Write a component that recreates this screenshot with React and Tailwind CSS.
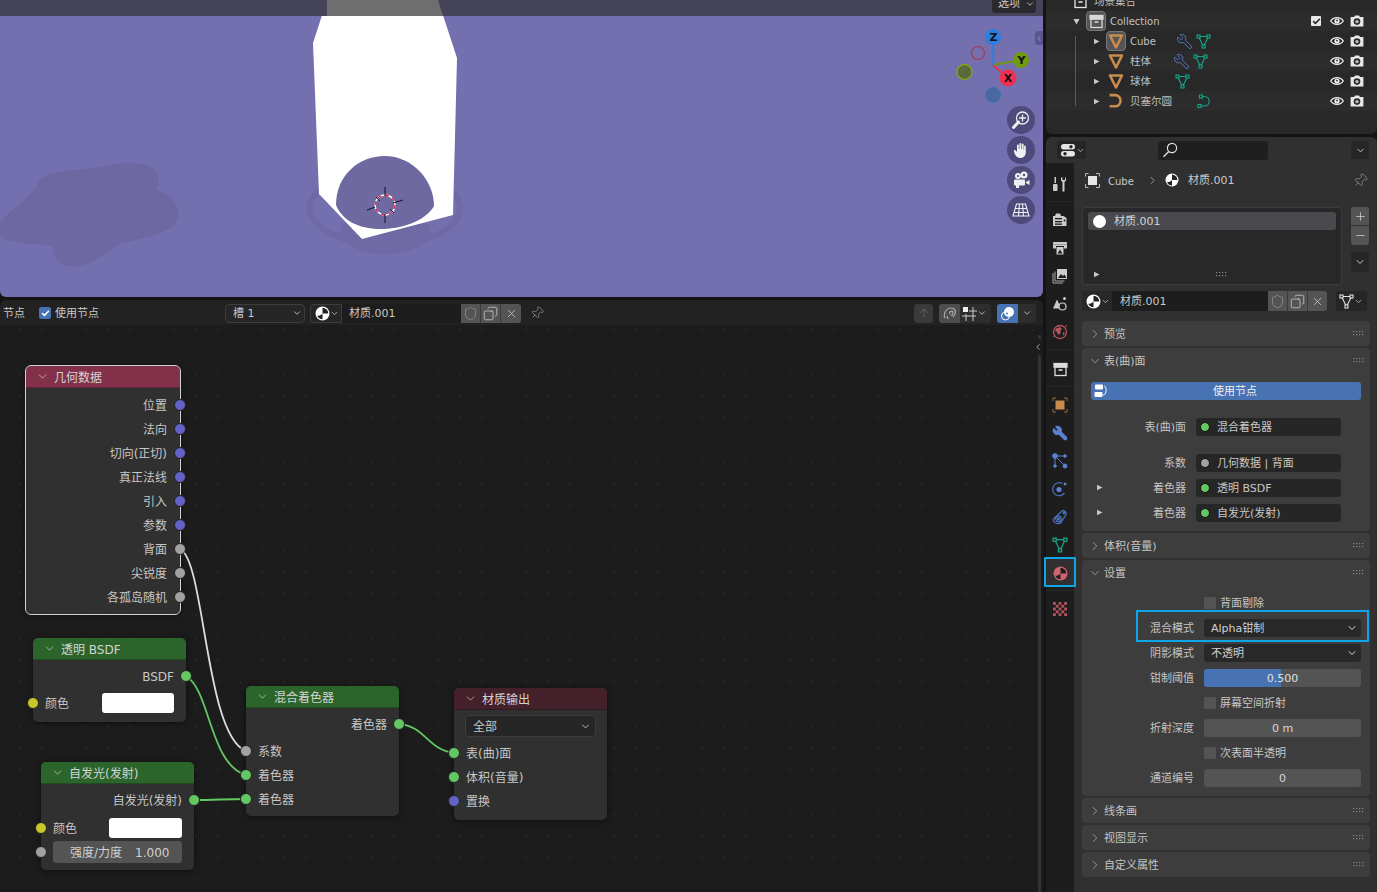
import React from 'react';
import { Wrench, ChevronDown, ChevronRight, Pin, X, Plus, Minus, Check, Shield, Copy, ArrowUp } from 'lucide-react';

const T = ({ children, cls = 'top-px' }) => <span className={`relative ${cls}`}>{children}</span>;

const Ball = ({ c = '#fff', d = '#222', s = 14 }) => (
  <svg width={s} height={s} viewBox="0 0 14 14" className="shrink-0">
    <circle cx="7" cy="7" r="6.5" fill={c} />
    <path d="M7 1.600A5.400 5.400 0 0 1 12.400 7H7Z" fill={d} />
    <path d="M7 7v5.400A5.400 5.400 0 0 1 2.100 9.200C4 9.200 6 8.500 7 7Z" fill={d} />
  </svg>
);
const Mesh = ({ c = '#12a98a', s = 15 }) => (
  <svg width={s} height={s} viewBox="0 0 15 15" fill="none" stroke={c} strokeWidth="1.100" className="shrink-0">
    <path d="M2.500 2.500h10L7.500 12.500Z" />
    <rect x="1" y="1" width="3" height="3" fill="#2a2a2a" />
    <rect x="11" y="1" width="3" height="3" fill="#2a2a2a" />
    <rect x="6" y="11" width="3" height="3" fill="#2a2a2a" />
  </svg>
);
const ObjTri = () => (
  <svg width="16" height="16" viewBox="0 0 16 16" className="shrink-0">
    <path d="M2 2.500h12L8 14.500Z" fill="none" stroke="#c98a4e" strokeWidth="2.600" strokeLinejoin="round" />
  </svg>
);
const Curve = ({ c = '#c98a4e', w = 2.400, s = 16 }) => (
  <svg width={s} height={s} viewBox="0 0 15 15" fill="none" stroke={c} strokeWidth={w} className="shrink-0">
    <path d="M1.500 2h5c7 0 7 10.500 0 10.500h-5" />
  </svg>
);
const CurveData = () => (
  <svg width="15" height="15" viewBox="0 0 15 15" fill="none" stroke="#12a98a" strokeWidth="1.100" className="shrink-0">
    <path d="M4 2.500h3c7 0 7 9.500 0 9.500H3" />
    <rect x="2.500" y="1" width="3" height="3" fill="#2a2a2a" />
    <rect x="1" y="10.500" width="3" height="3" fill="#2a2a2a" />
  </svg>
);
const Eye = () => (
  <svg width="14" height="10" viewBox="0 0 14 10" className="shrink-0">
    <path d="M.7 5C3.500.6 10.500.6 13.300 5 10.500 9.400 3.500 9.400.7 5Z" fill="none" stroke="#eee" strokeWidth="1.300" />
    <circle cx="7" cy="5" r="2.600" fill="#eee" />
    <circle cx="7" cy="4.600" r="0.900" fill="#2a2a2a" />
  </svg>
);
const Cam = () => (
  <svg width="14" height="12" viewBox="0 0 14 12" className="shrink-0">
    <path d="M1 2h3l1-1.500h4L10 2h3.400v9.500H.6V2Z" fill="#e8e8e8" />
    <circle cx="7" cy="6.600" r="3.300" fill="#2a2a2a" />
    <circle cx="7" cy="6.600" r="1.700" fill="#bbb" />
  </svg>
);
const Box = ({ c = '#e4e4e4', s = 15 }) => (
  <svg width={s} height={s} viewBox="0 0 15 15" fill="none" stroke={c} strokeWidth="1.300" className="shrink-0">
    <rect x="1" y="1.500" width="13" height="3.500" fill={c} />
    <rect x="2" y="5" width="11" height="8.500" />
    <path d="M5.500 8h4" strokeWidth="1.600" />
  </svg>
);
const Grip = () => (
  <svg width="11" height="5" viewBox="0 0 11 5" fill="#8a8a8a" className="shrink-0">
    {[0, 3, 6, 9].map(x => <g key={x}><rect x={x} y="0" width="1.200" height="1.200" /><rect x={x} y="3" width="1.200" height="1.200" /></g>)}
  </svg>
);
const Tri = ({ down }) => (
  <svg width="7" height="7" viewBox="0 0 7 7" fill="#c8c8c8" className="shrink-0">
    {down ? <path d="M.5 1h6L3.500 6.500Z" /> : <path d="M1 .8 6.500 3.500 1 6.200Z" />}
  </svg>
);

const Row = ({ ind, tri, icon, active, label, lw, extras, stripe, check, first }) => (
  <div className={`h-5 shrink-0 flex items-center relative ${stripe ? 'bg-[#2c2c2c]' : 'bg-[#282828]'} ${first ? '-mt-[9px]' : ''}`}>
    <div className={`flex items-center ${ind}`}>
      <div className="w-[13px] flex">{tri}</div>
      <div className={`w-[20px] h-[20px] flex items-center justify-center rounded-[4px] ${active ? 'bg-[#555] border border-[#777]' : ''}`}>{icon}</div>
      <div className={`text-[#c0c0c0] ml-[4px] ${lw}`}><T>{label}</T></div>
      <div className="flex items-center gap-[3px]">{extras}</div>
    </div>
    <div className="ml-auto flex items-center gap-[6px] pr-[13px]">
      {check && <div className="w-[10px] h-[10px] mr-[3px] bg-[#e8e8e8] rounded-[1px] flex items-center justify-center"><Check size={9} color="#222" strokeWidth={4} /></div>}
      {!first && <Eye />}
      {!first && <Cam />}
    </div>
  </div>
);

const WrenchO = ({ c = '#5274c0' }) => <Wrench size={17} color={c} strokeWidth={1.400} className="-scale-x-100 shrink-0" />;

const Outliner = () => (
  <div className="h-[134px] overflow-hidden bg-[#282828] rounded-b-[6px] text-[10.5px] flex flex-col">
    <Row first ind="pl-[11px]" tri={null} icon={<Box />} label="场景集合" lw="w-[50px]" />
    <Row stripe check ind="pl-[27px]" tri={<Tri down />} icon={<Box c="#d8d8d8" />} active label={<span className="text-[10px]">Collection</span>} lw="w-[60px]" />
    <Row ind="pl-[47px]" tri={<Tri />} icon={<ObjTri />} active label={<span className="text-[10px]">Cube</span>} lw="w-[46px]" extras={<><WrenchO /><Mesh /></>} />
    <Row stripe ind="pl-[47px]" tri={<Tri />} icon={<ObjTri />} label="柱体" lw="w-[43px]" extras={<><WrenchO /><Mesh /></>} />
    <Row ind="pl-[47px]" tri={<Tri />} icon={<ObjTri />} label="球体" lw="w-[45px]" extras={<Mesh />} />
    <Row stripe ind="pl-[47px]" tri={<Tri />} icon={<Curve />} label="贝塞尔圆" lw="w-[67px]" extras={<CurveData />} />
    <div className="w-px h-[70px] bg-[#5a5a5a] absolute left-[1075px] top-[36px]" />
  </div>
);

const Tab = ({ children, cls = '' }) => <div className={`h-[28px] w-full shrink-0 flex items-center justify-center ${cls}`}>{children}</div>;
const Sep = () => <div className="w-full h-px mt-[3px] mb-[4px] bg-[#262626] shrink-0" />;

const Tabs = () => (
  <div className="w-[28px] shrink-0 bg-[#1d1d1d] flex flex-col items-center pt-[7px] relative">
    <Tab>
      <svg width="16" height="16" viewBox="0 0 16 16" fill="#ccc"><rect x="2.500" y="1" width="1.500" height="6" /><rect x="1" y="8" width="4.500" height="7" rx="1" /><path d="M9 1.500v3l1.500 1.500v9.500h2V6L14 4.500v-3l-1 0v2.500h-2.500V1.500Z" /></svg>
    </Tab>
    <Sep />
    <Tab>
      <svg width="16" height="16" viewBox="0 0 16 16"><path d="M1 4h10.500l3 2v8H1Z" fill="#ccc" /><path d="M4 1.500h4L9 4H3Z" fill="#ccc" /><rect x="3" y="6" width="7" height="1.300" fill="#1d1d1d" /><rect x="3" y="9" width="7" height="1.300" fill="#1d1d1d" /><rect x="3" y="11.500" width="7" height="1.300" fill="#1d1d1d" /><circle cx="12.500" cy="8.500" r="1" fill="#1d1d1d" /></svg>
    </Tab>
    <Tab>
      <svg width="16" height="16" viewBox="0 0 16 16"><rect x="1" y="2" width="14" height="2.500" fill="#ccc" rx="0.500" /><path d="M1 4.500h14v4h-3V6H4v2.500H1Z" fill="#ccc" /><rect x="4.500" y="7" width="7" height="7.500" fill="#ccc" /><path d="M5.500 13.500 8 9.500l2.500 4Z" fill="#1d1d1d" /></svg>
    </Tab>
    <Tab>
      <svg width="16" height="16" viewBox="0 0 16 16" fill="none" stroke="#aaa" strokeWidth="1"><path d="M1 5v10h10" /><path d="M3 3.500V13h9.500" /><rect x="5" y="1" width="10" height="10" fill="#ccc" stroke="none" /><path d="M6 10l3-4 2 2 1.500-1.500L14.500 10Z" fill="#1d1d1d" stroke="none" /></svg>
    </Tab>
    <Tab>
      <svg width="16" height="16" viewBox="0 0 16 16"><path d="M5 3.500 9 12.500H1Z" fill="#ccc" /><circle cx="12.500" cy="2.500" r="1.500" fill="#ccc" /><circle cx="10.500" cy="10.500" r="3.500" fill="#1d1d1d" stroke="#ccc" strokeWidth="1.200" /></svg>
    </Tab>
    <Tab>
      <svg width="16" height="16" viewBox="0 0 16 16"><circle cx="8" cy="8" r="6.500" fill="#1d1d1d" stroke="#b5535f" strokeWidth="1.300" /><path d="M4 4.500 8 3l2 2-2 2 1 2-3 2-1-3-2-1ZM11 8l2 1-2 3Z" fill="#b5535f" /><path d="M1 13 3 11M13 3l2-2" stroke="#b5535f" /></svg>
    </Tab>
    <div className="w-full h-px mt-[3px] mb-[5px] bg-[#262626] shrink-0" />
    <Tab><Box c="#dcdcdc" /></Tab>
    <Sep />
    <Tab>
      <svg width="16" height="16" viewBox="0 0 16 16" fill="none" stroke="#9a6a3c" strokeWidth="1"><path d="M1 4V1h3M12 1h3v3M15 12v3h-3M4 15H1v-3" /><rect x="3.500" y="3.500" width="9" height="9" fill="#c98a4e" stroke="none" /></svg>
    </Tab>
    <Tab><Wrench size={16} color="#5a80d0" fill="#5a80d0" className="-scale-x-100" /></Tab>
    <Tab>
      <svg width="16" height="16" viewBox="0 0 16 16" stroke="#5a80d0" strokeWidth="1" fill="#5a80d0"><path d="M3 3h10M3 3v10M3 3l10 10" /><circle cx="3" cy="3" r="2.400" /><circle cx="13" cy="3" r="1.300" /><circle cx="3" cy="13" r="1.300" /><circle cx="13" cy="13" r="2" /></svg>
    </Tab>
    <Tab>
      <svg width="16" height="16" viewBox="0 0 16 16" fill="none" stroke="#4a70bd" strokeWidth="1.300"><path d="M12.500 12A6.500 6.500 0 1 1 10 2.300" /><circle cx="7" cy="8.500" r="2.600" fill="#5a80d0" stroke="none" /><circle cx="13" cy="3" r="1.500" fill="#5a80d0" stroke="none" /></svg>
    </Tab>
    <Tab>
      <svg width="16" height="16" viewBox="0 0 16 16" fill="none" stroke="#4a70bd" strokeWidth="1.300"><path d="M1.500 10 10 2c2-1.500 4.500 1 4 3.500L9 13.500c-3 2.500-9 0-7.500-3.500Z" /><circle cx="6.500" cy="10" r="2.800" /><circle cx="6.500" cy="10" r="1" fill="#5a80d0" /><circle cx="12" cy="4" r="0.800" fill="#5a80d0" /></svg>
    </Tab>
    <Tab><Mesh s={16} /></Tab>
    <Tab cls="bg-[#303030]">
      <Ball c="#cf6470" d="#1d1d1d" s={15} />
    </Tab>
    <Sep />
    <Tab>
      <svg width="14" height="14" viewBox="0 0 14 14"><rect width="14" height="14" fill="#b5535f" />{[[2.800,0],[8.400,0],[0,2.800],[5.600,2.800],[11.200,2.800],[2.800,5.600],[8.400,5.600],[0,8.400],[5.600,8.400],[11.200,8.400],[2.800,11.200],[8.400,11.200]].map(([x, y]) => <rect key={`${x}-${y}`} x={x} y={y} width="2.800" height="2.800" fill="#1d1d1d" />)}</svg>
    </Tab>
  </div>
);

const Panel = ({ title, open, children, cls = 'h-[25px]' }) => (
  <div className={`bg-[#3d3d3d] rounded-[4px] shrink-0 ${cls}`}>
    <div className="h-[25px] flex items-center pl-[6px] pr-[6px] text-[#c4c4c4]">
      {open ? <ChevronDown size={14} color="#bbb" strokeWidth={1.200} /> : <ChevronRight size={14} color="#bbb" strokeWidth={1.200} />}
      <span className="ml-[2px]"><T cls="top-[2px]">{title}</T></span>
      <span className="ml-auto"><Grip /></span>
    </div>
    {children}
  </div>
);

const SockField = ({ label, color, text, tri }) => (
  <div className="flex items-center h-[18px] relative">
    {tri && <div className="absolute left-[14px] top-[5px]"><Tri /></div>}
    <div className="w-[104px] text-right text-[#c4c4c4]"><T>{label}</T></div>
    <div className="ml-[10px] w-[145px] h-[18px] bg-[#262626] rounded-[3px] flex items-center pl-[4px] text-[#c8c8c8]">
      <span className="w-[10px] h-[10px] rounded-full border border-[#111] shrink-0" style={{ background: color }} />
      <span className="ml-[7px]"><T>{text}</T></span>
    </div>
  </div>
);

const SetRow = ({ label, children }) => (
  <div className="flex items-center h-[18px]">
    <div className="w-[112px] text-right text-[#c4c4c4]"><T>{label}</T></div>
    <div className="ml-[10px] w-[157px] h-[18px]">{children}</div>
  </div>
);
const Sel = ({ text }) => (
  <div className="h-full bg-[#282828] rounded-[3px] flex items-center pl-[7px] pr-[3px] text-[#d0d0d0]">
    <T>{text}</T><ChevronDown size={12} color="#ddd" className="ml-auto" />
  </div>
);
const Num = ({ text }) => (
  <div className="h-full bg-[#545454] rounded-[3px] flex items-center justify-center text-[#d8d8d8]"><T>{text}</T></div>
);
const Chk = ({ text }) => (
  <div className="flex items-center h-[18px] pl-[122px] text-[#c8c8c8]">
    <span className="w-[12px] h-[12px] rounded-[2px] bg-[#545454]" />
    <span className="ml-[4px]"><T>{text}</T></span>
  </div>
);

const Props = () => (
  <div className="flex-1 min-h-0 mt-[3px] bg-[#303030] rounded-t-[6px] flex flex-col text-[11px]">
    <div className="h-[26px] shrink-0 flex items-center pl-[11px] pr-[8px]">
      <div className="w-[29px] h-[18px] bg-[#262626] rounded-[3px] flex items-center pl-[4px]">
        <svg width="15" height="13" viewBox="0 0 15 13" fill="#e5e5e5"><rect x="0" y="0" width="14" height="5.500" rx="2.700" /><rect x="0" y="7" width="14" height="5.500" rx="2.700" /><circle cx="10" cy="2.700" r="1.700" fill="#262626" /><circle cx="4" cy="9.700" r="1.700" fill="#262626" /></svg>
        <ChevronDown size={9} color="#ccc" />
      </div>
      <div className="ml-[72px] w-[110px] h-[19px] bg-[#1f1f1f] rounded-[3px] flex items-center pl-[4px]">
        <svg width="16" height="16" viewBox="0 0 16 16" fill="none" stroke="#e0e0e0" strokeWidth="1.200"><circle cx="10" cy="6" r="4.600" /><path d="M6.800 9.400 1.500 14.800" strokeWidth="1.400" /></svg>
      </div>
      <div className="ml-auto w-[18px] h-[18px] bg-[#262626] rounded-[3px] flex items-center justify-center"><ChevronDown size={11} color="#ccc" /></div>
    </div>
    <div className="flex-1 min-h-0 flex">
      <Tabs />
      <div className="relative flex-1 min-w-0 pl-[8px] pr-[7px] flex flex-col">
        <div className="h-[34px] shrink-0 flex items-center pl-[3px] text-[#c8c8c8]">
          <svg width="15" height="15" viewBox="0 0 15 15" fill="none" stroke="#bbb" className="shrink-0"><path d="M.5 3.500V.5h3M11 .5h3.500v3M14.500 11v3.500H11M3.500 14.500h-3V11" /><rect x="3" y="3" width="9" height="9" fill="#e6e6e6" stroke="none" /></svg>
          <span className="ml-[8px] text-[10px] w-[38px]"><T>Cube</T></span>
          <ChevronRight size={13} color="#bbb" strokeWidth={1.300} />
          <span className="ml-[6px]"><Ball /></span>
          <span className="ml-[9px]"><T>材质.001</T></span>
          <Pin size={15} color="#999" strokeWidth={1.200} className="ml-auto mr-[2px] rotate-45" />
        </div>
        <div className="h-[78px] mt-[10px] shrink-0 flex gap-[9px]">
          <div className="w-[260px] h-full bg-[#282828] rounded-[4px] border border-[#3c3c3c] relative px-[5px] pt-[4px]">
            <div className="h-[18px] bg-[#4a4a4e] rounded-[3px] flex items-center pl-[5px] text-[#d0d0d0]">
              <span className="w-[13px] h-[13px] rounded-full bg-white" />
              <span className="ml-[8px]"><T>材质.001</T></span>
            </div>
            <div className="absolute left-[10px] bottom-[6px]"><Tri /></div>
            <div className="absolute left-[133px] bottom-[7px]"><Grip /></div>
          </div>
          <div className="flex flex-col w-[18px]">
            <div className="h-[19px] bg-[#545454] rounded-t-[3px] flex items-center justify-center border-b border-[#333]"><Plus size={13} color="#ddd" strokeWidth={1.300} /></div>
            <div className="h-[19px] bg-[#545454] rounded-b-[3px] flex items-center justify-center"><Minus size={13} color="#ddd" strokeWidth={1.300} /></div>
            <div className="h-[20px] mt-[7px] bg-[#262626] rounded-[3px] flex items-center justify-center"><ChevronDown size={12} color="#ccc" /></div>
          </div>
        </div>
        <div className="h-[20px] mt-[6px] shrink-0 flex items-center">
          <div className="w-[30px] h-full bg-[#282828] rounded-l-[3px] flex items-center pl-[4px]"><Ball s={15} /><ChevronDown size={9} color="#ccc" /></div>
          <div className="w-[156px] h-full bg-[#1d1d1d] flex items-center pl-[8px] text-[#c8c8c8]"><T>材质.001</T></div>
          <div className="w-[20px] h-full bg-[#545454] flex items-center justify-center border-r border-[#3a3a3a]"><Shield size={15} color="#999" strokeWidth={1.100} /></div>
          <div className="w-[20px] h-full bg-[#545454] flex items-center justify-center border-r border-[#3a3a3a]"><Copy size={15} color="#ddd" strokeWidth={1.100} className="-scale-x-100" /></div>
          <div className="w-[19px] h-full bg-[#545454] rounded-r-[3px] flex items-center justify-center"><X size={13} color="#ddd" strokeWidth={1.300} /></div>
          <div className="ml-[9px] w-[31px] h-full bg-[#262626] rounded-[3px] flex items-center pl-[3px]"><Mesh c="#e0e0e0" s={15} /><ChevronDown size={9} color="#ccc" /></div>
        </div>
        <div className="mt-[10px] flex flex-col gap-[2px]">
          <Panel title="预览" />
          <Panel title="表(曲)面" open cls="h-[183px]">
            <div className="mt-[9px] mx-[9px] h-[18px] bg-[#4772b3] rounded-[3px] relative flex items-center justify-center pl-[18px] text-[#f0f0f0]">
              <svg width="14" height="14" viewBox="0 0 14 14" className="absolute left-[3px]"><rect x="1" y="0.500" width="8" height="5" rx="1" fill="#fff" /><rect x="0.500" y="8" width="8" height="5" rx="1" fill="#fff" /><path d="M10 2c3 0 3 9-1 9" fill="none" stroke="#fff" /></svg>
              <T>使用节点</T>
            </div>
            <div className="mt-[18px]"><SockField label="表(曲)面" color="#63c763" text="混合着色器" /></div>
            <div className="mt-[18px] flex flex-col gap-[7px]">
              <SockField label="系数" color="#a1a1a1" text="几何数据 | 背面" />
              <SockField label="着色器" color="#63c763" text="透明 BSDF" tri />
              <SockField label="着色器" color="#63c763" text="自发光(发射)" tri />
            </div>
          </Panel>
          <Panel title="体积(音量)" />
          <Panel title="设置" open cls="h-[236px]">
            <div className="mt-[9px] flex flex-col gap-[7px]">
              <Chk text="背面剔除" />
              <SetRow label="混合模式"><Sel text="Alpha钳制" /></SetRow>
              <SetRow label="阴影模式"><Sel text="不透明" /></SetRow>
              <SetRow label="钳制阈值">
                <div className="h-full bg-[#545454] rounded-[3px] relative overflow-hidden flex items-center justify-center text-[#e0e0e0]">
                  <div className="absolute left-0 top-0 bottom-0 w-[77px] bg-[#4772b3]" />
                  <T>0.500</T>
                </div>
              </SetRow>
              <Chk text="屏幕空间折射" />
              <SetRow label="折射深度"><Num text="0 m" /></SetRow>
              <Chk text="次表面半透明" />
              <SetRow label="通道编号"><Num text="0" /></SetRow>
            </div>
          </Panel>
          <Panel title="线条画" />
          <Panel title="视图显示" />
          <Panel title="自定义属性" />
        </div>
      </div>
    </div>
  </div>
);

const Scene = () => (
  <svg width="1043" height="297" viewBox="0 0 1043 297" className="absolute inset-0">
    <g fill="#6d68a2">
      <path d="M0 222C15 205 35 195 38 182c5-10 40-12 60-15 25-6 55-7 60 8 2 8-2 12-2 15 15 4 24 14 22 28-2 13-25 18-55 25-15 5-25 20-45 23-25 3-25-15-25-20-20-3-50-2-53-12Z" />
      <ellipse cx="385" cy="208" rx="75" ry="37" fill="none" stroke="#6f6aa6" strokeWidth="6" />
      <ellipse cx="385" cy="232" rx="45" ry="22" fill="#6f6aa6" />
    </g>
    <path d="M327 0H438L457 58 453 215 362 239 319 194 313 43Z" fill="#fff" />
    <path d="M336 205C336 176 358 156 385 156 412 156 434 180 434 206 425 222 400 229 380 229 358 229 342 220 336 205Z" fill="#6e69a0" />
    <g fill="none">
      <circle cx="385" cy="205" r="10" stroke="#fff" strokeWidth="1.400" />
      <circle cx="385" cy="205" r="10" stroke="#e02040" strokeWidth="1.400" strokeDasharray="3.800 4" />
      <path d="M385 187v9M385 214v9M367 210l8-3M393 203l10-3" stroke="#1b1b35" strokeWidth="1.100" />
      <path d="M376 197l4 4M390 209l4 4" stroke="#1b1b35" strokeWidth="1" />
    </g>
    <rect x="0" y="0" width="1043" height="16" fill="#45435a" />
    <path d="M327 0H438L443 16H327Z" fill="#6e6e6e" />
    <g>
      <path d="M993 37V65" stroke="#2a7fdf" strokeWidth="1.800" />
      <path d="M993 65 1021 60" stroke="#6f9a10" strokeWidth="1.800" />
      <path d="M993 65 1008 78" stroke="#e8304c" strokeWidth="1.800" />
      <circle cx="978" cy="53" r="6.500" fill="none" stroke="#a83a50" strokeWidth="1.200" />
      <circle cx="964.500" cy="72" r="7.500" fill="#5a6a3a" stroke="#7fa51a" strokeWidth="1.400" />
      <circle cx="993" cy="95" r="7.500" fill="#4a68a0" stroke="#3e70b8" strokeWidth="1" />
      <circle cx="993" cy="37" r="8" fill="#2a7fdf" />
      <circle cx="1021" cy="60" r="8" fill="#6f9a10" />
      <circle cx="1008" cy="78" r="8.500" fill="#f0304f" />
    </g>
    <g fontFamily="'DejaVu Sans',sans-serif" fontSize="11" fontWeight="700" textAnchor="middle" fill="#111">
      <text x="993.500" y="41">Z</text>
      <text x="1021.500" y="64">Y</text>
      <text x="1008" y="82">X</text>
    </g>
  </svg>
);

const NavBtn = ({ children }) => (
  <div className="w-[28px] h-[28px] rounded-full bg-[#4e4a7c] flex items-center justify-center">{children}</div>
);

const Viewport = () => (
  <div className="relative h-[297px] shrink-0 bg-[#746fae] overflow-hidden rounded-b-[6px] text-[11px]">
    <Scene />
    <div className="absolute left-[992px] -top-[5px] w-[44px] h-[18px] bg-[#29292e] rounded-[3px] flex items-center pl-[6px] text-[#d0d0d0]">选项<ChevronDown size={10} color="#ccc" className="ml-[5px]" /></div>
    <div className="absolute left-[1035px] top-[31px] w-[8px] h-[14px] bg-[#5a5690] rounded-l-[3px] flex items-center justify-center">
      <ChevronRight size={9} color="#bbb" className="rotate-180" />
    </div>
    <div className="absolute left-[1007px] top-[106px] flex flex-col gap-[2px]">
      <NavBtn>
        <svg width="20" height="20" viewBox="0 0 20 20" fill="none" stroke="#f0f0f0" strokeWidth="1.300"><circle cx="11.500" cy="8" r="6" /><path d="M8 8h7M11.500 4.500v7" /><path d="M7.500 12 2.500 17.500" strokeWidth="3" strokeLinecap="round" /></svg>
      </NavBtn>
      <NavBtn>
        <svg width="18" height="18" viewBox="0 0 18 18" fill="#f0f0f0"><path d="M2 9.500c1-1 2 0 3 1.500V4.500c0-1.300 1.800-1.300 1.800 0V8h.6V2.800c0-1.200 1.800-1.200 1.800 0V8h.6V3.500c0-1.200 1.800-1.200 1.800 0V8.500h.5V5.500c0-1.200 1.700-1.200 1.700 0V11c0 3.500-2 6-5.500 6-3 0-4-1.500-5.500-4C2.500 11.500 1.500 10.200 2 9.500Z" /></svg>
      </NavBtn>
      <NavBtn>
        <svg width="20" height="20" viewBox="0 0 20 20" fill="#f0f0f0"><circle cx="7" cy="6" r="3" /><circle cx="13" cy="5" r="3.500" /><circle cx="7" cy="6" r="1" fill="#4e4a7c" /><circle cx="13" cy="5" r="1.200" fill="#4e4a7c" /><rect x="3" y="9.500" width="11" height="6" rx="1" /><path d="M15 12l3.500-2v5l-3.500-2Z" /><rect x="5" y="15" width="3" height="3" /></svg>
      </NavBtn>
      <NavBtn>
        <svg width="18" height="18" viewBox="0 0 18 18" fill="none" stroke="#f0f0f0" strokeWidth="1.100"><path d="M4.500 3h9L17 15H1ZM3 7.500h12M1.800 11.500h14.400M7.500 3 6.500 15M10.500 3 11.500 15" /></svg>
      </NavBtn>
    </div>
  </div>
);

const Socket = ({ c, side }) => (
  <span className={`absolute top-1/2 -translate-y-1/2 w-[12px] h-[12px] rounded-full border border-[#222] ${side === 'l' ? '-left-[6px]' : '-right-[6px]'}`} style={{ background: c }} />
);
const BLUE = '#6363c7', GRAY = '#a1a1a1', GREEN = '#63c763', YEL = '#c7c729';
const NR = ({ c, side = 'r', h = 'h-6', pr = 'pr-[12px]', pl = 'pl-[12px]', cls = '', children }) => (
  <div className={`relative flex items-center ${h} ${side === 'r' ? `justify-end ${pr}` : pl} ${cls}`}>
    {c && <Socket c={c} side={side} />}
    {children}
  </div>
);
const Node = ({ title, hd, pos, sel, children, body = 'pt-[5px] pb-[5px]' }) => (
  <div className={`absolute ${pos} bg-[#303030] rounded-[5px] shadow-[0_1px_6px_rgba(0,0,0,0.5)] text-[12px] text-[#c6c6c6] ${sel ? 'outline outline-[1.5px] outline-[#d2d2d2]' : ''}`}>
    <div className={`h-[22px] flex items-center pl-[10px] rounded-t-[5px] border-b border-[#00000040] text-[#d4d4d4] ${hd}`}>
      <ChevronDown size={13} color="#ddd" strokeWidth={1.200} />
      <span className="ml-[5px]"><T>{title}</T></span>
    </div>
    <div className={body}>{children}</div>
  </div>
);

const Canvas = () => (
  <div className="relative flex-1 min-h-0 overflow-hidden bg-[#1c1c1c] bg-[radial-gradient(circle,#262626_1.4px,transparent_1.6px)] bg-[length:22px_22px] bg-[position:9px_-6px]">
    <svg width="1043" height="567" viewBox="0 325 1043 567" fill="none" className="absolute inset-0" strokeWidth="1.800">
      <path d="M180 549C205 560 205 735 246 751" stroke="#dcdcdc" />
      <path d="M186 676C210 690 210 765 246 775" stroke="#63c763" />
      <path d="M194 800C215 800 225 799 246 799" stroke="#63c763" />
      <path d="M399 724C425 726 428 750 454 753" stroke="#63c763" />
    </svg>
    <Node title="几何数据" hd="bg-[#83314a]" pos="left-[26px] top-[41px] w-[154px]" sel>
      {[['位置', BLUE], ['法向', BLUE], ['切向(正切)', BLUE], ['真正法线', BLUE], ['引入', BLUE], ['参数', BLUE], ['背面', GRAY], ['尖锐度', GRAY], ['各孤岛随机', GRAY]].map(([t, c]) => <NR key={t} c={c} pr="pr-[13px]"><T>{t}</T></NR>)}
    </Node>
    <Node title="透明 BSDF" hd="bg-[#2b652b]" pos="left-[33px] top-[313px] w-[153px]" body="pt-[4px] pb-[4px]">
      <NR c={GREEN} h="h-[24px]"><T>BSDF</T></NR>
      <NR c={YEL} side="l" h="h-[30px]">
        <T>颜色</T><span className="ml-auto mr-[12px] w-[72px] h-[20px] bg-white rounded-[3px]" />
      </NR>
    </Node>
    <Node title="自发光(发射)" hd="bg-[#2b652b]" pos="left-[41px] top-[437px] w-[153px]" body="pt-[4px] pb-[7px]">
      <NR c={GREEN} h="h-[24px]"><T>自发光(发射)</T></NR>
      <NR c={YEL} side="l" h="h-[32px]">
        <T>颜色</T><span className="ml-auto mr-[12px] w-[73px] h-[20px] bg-white rounded-[3px]" />
      </NR>
      <NR c={GRAY} side="l" h="h-[22px]" cls="-mt-[3px]">
        <span className="w-[129px] h-[22px] bg-[#545454] rounded-[3px] flex items-center pl-[17px] text-[#d0d0d0]">
          <T>强度/力度</T><span className="ml-[13px]"><T>1.000</T></span>
        </span>
      </NR>
    </Node>
    <Node title="混合着色器" hd="bg-[#2b652b]" pos="left-[246px] top-[361px] w-[153px]" body="pt-[4px] pb-[5px]">
      <NR c={GREEN} h="h-[24px]"><T>着色器</T></NR>
      <div className="h-[3px]" />
      <NR c={GRAY} side="l"><T>系数</T></NR>
      <NR c={GREEN} side="l"><T>着色器</T></NR>
      <NR c={GREEN} side="l"><T>着色器</T></NR>
    </Node>
    <Node title="材质输出" hd="bg-[#43202a]" pos="left-[454px] top-[363px] w-[153px]" body="pt-[5px] pb-[7px]">
      <div className="mx-[11px] mb-[4px] h-[22px] bg-[#262626] border border-[#3d3d3d] rounded-[4px] flex items-center pl-[7px] pr-[4px]"><T>全部</T><ChevronDown size={11} color="#ccc" className="ml-auto" /></div>
      <NR c={GREEN} side="l"><T>表(曲)面</T></NR>
      <NR c={GREEN} side="l"><T>体积(音量)</T></NR>
      <NR c={BLUE} side="l"><T>置换</T></NR>
    </Node>
    <div className="absolute left-[1038px] top-[10px] bottom-0 w-[3px] bg-[#333]" />
    <div className="absolute left-[1033px] top-[14px] w-[10px] h-[16px] bg-[#1c1c1c] flex items-center justify-center">
      <ChevronRight size={12} color="#bbb" className="rotate-180" />
    </div>
  </div>
);

const NodeHeader = () => (
  <div className="h-[25px] shrink-0 bg-[#222] flex items-center pt-px text-[11px] text-[#c8c8c8] pl-[3px] pr-[7px]">
    <T>节点</T>
    <span className="ml-[14px] w-[12px] h-[12px] rounded-[2px] bg-[#4772b3] flex items-center justify-center"><Check size={9} color="#fff" strokeWidth={4} /></span>
    <span className="ml-[4px]"><T>使用节点</T></span>
    <div className="ml-[126px] w-[80px] h-[19px] bg-[#262626] border border-[#3d3d3d] rounded-[4px] flex items-center pl-[7px] pr-[2px]"><T>槽 1</T><ChevronDown size={10} color="#ccc" className="ml-auto" /></div>
    <div className="ml-[5px] flex h-[19px]">
      <div className="w-[32px] bg-[#262626] border border-[#3d3d3d] rounded-l-[4px] flex items-center pl-[4px]"><Ball s={15} /><ChevronDown size={9} color="#ccc" /></div>
      <div className="w-[119px] bg-[#1d1d1d] flex items-center pl-[7px]"><T>材质.001</T></div>
      <div className="w-[20px] bg-[#545454] flex items-center justify-center border-r border-[#3a3a3a]"><Shield size={15} color="#999" strokeWidth={1.100} /></div>
      <div className="w-[20px] bg-[#545454] flex items-center justify-center border-r border-[#3a3a3a]"><Copy size={15} color="#ddd" strokeWidth={1.100} className="-scale-x-100" /></div>
      <div className="w-[20px] bg-[#545454] rounded-r-[3px] flex items-center justify-center"><X size={13} color="#ddd" strokeWidth={1.300} /></div>
    </div>
    <Pin size={14} color="#999" strokeWidth={1.200} className="ml-[9px] rotate-45" />
    <div className="ml-auto flex items-center h-[19px]">
      <div className="w-[19px] h-full bg-[#3a3a3a] rounded-[3px] flex items-center justify-center"><ArrowUp size={14} color="#777" strokeWidth={1} /></div>
      <div className="ml-[6px] w-[21px] h-full bg-[#4d4d4d] rounded-l-[3px] flex items-center justify-center">
        <svg width="14" height="14" viewBox="0 0 14 14" fill="none" stroke="#aaa" strokeWidth="1.200"><path d="M2 12C0 8 3 2 8 2c4 0 5 3 4 6l-2 3M5 13l-1-3M7 8c-1-2 1-3 2-3 1 .3 1.300 1.500 .5 3l-1 2" /></svg>
      </div>
      <div className="w-[31px] h-full bg-[#2d2d2d] rounded-r-[3px] flex items-center pl-[2px]">
        <svg width="15" height="15" viewBox="0 0 15 15" stroke="#ccc" fill="none"><rect x="1" y="1" width="5" height="5" fill="#eee" stroke="none" /><path d="M0 10h14M4 8v7M11 1v14M7 5h8" /></svg>
        <ChevronDown size={10} color="#ccc" />
      </div>
      <div className="ml-[6px] w-[21px] h-full bg-[#4772b3] rounded-l-[3px] flex items-center justify-center">
        <svg width="15" height="15" viewBox="0 0 15 15"><circle cx="9" cy="6" r="5" fill="#fff" /><circle cx="5.500" cy="10" r="4" fill="none" stroke="#fff" /><circle cx="7" cy="7.500" r="1" fill="#4772b3" /></svg>
      </div>
      <div className="w-[18px] h-full bg-[#2d2d2d] rounded-r-[3px] flex items-center justify-center"><ChevronDown size={10} color="#ccc" /></div>
    </div>
  </div>
);

export default function App() {
  return (
    <div className="relative w-[1377px] h-[892px] overflow-hidden flex bg-[#141414] [font-family:'DejaVu_Sans','Noto_Sans_CJK_SC',sans-serif]">
      <div className="w-[1043px] shrink-0 flex flex-col h-full">
        <Viewport />
        <div className="flex-1 min-h-0 mt-[3px] flex flex-col rounded-t-[6px] overflow-hidden">
          <NodeHeader />
          <Canvas />
        </div>
      </div>
      <div className="ml-[3px] flex-1 min-w-0 flex flex-col h-full">
        <Outliner />
        <Props />
      </div>
      <div className="absolute left-[1044px] top-[557px] w-[32px] h-[30px] border-2 border-[#0ea5e9] rounded-[1px] pointer-events-none" />
      <div className="absolute left-[1136px] top-[610px] w-[233px] h-[32px] border-2 border-[#0ea5e9] pointer-events-none" />
    </div>
  );
}
